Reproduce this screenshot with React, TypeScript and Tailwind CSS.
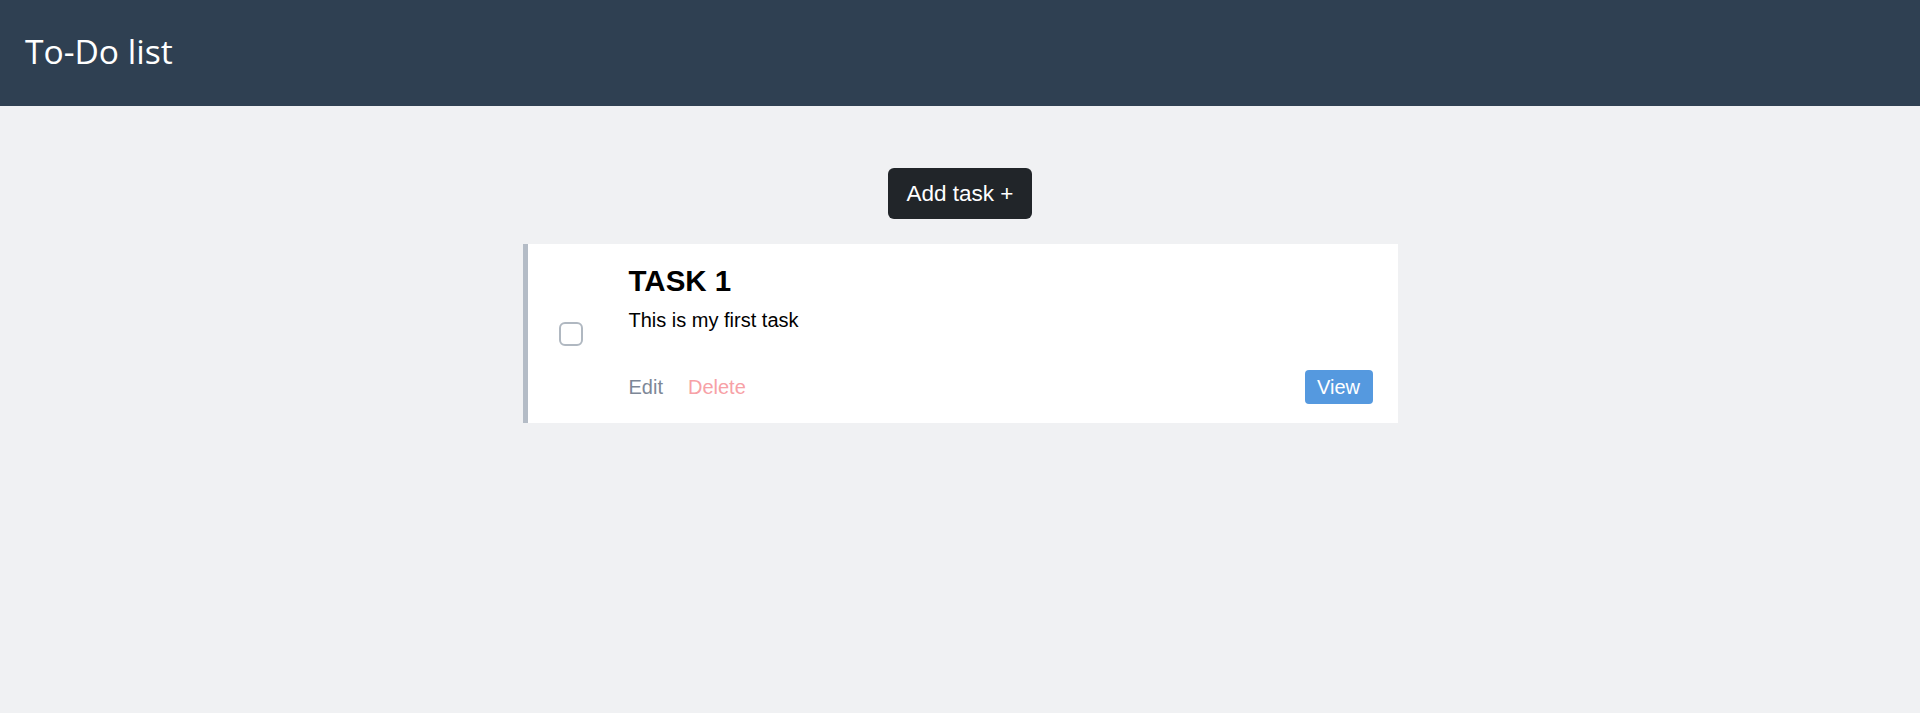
import React from "react";

export default function App() {
  return (
    <div className="min-h-[713px] bg-[#f0f1f3]" style={{ fontFamily: '"Liberation Sans", Arial, sans-serif' }}>
      <header className="h-[106px] bg-[#2f4052] flex items-center pl-[25px] pb-[2px]">
        <h1 className="text-white text-[33.6px] leading-none font-normal" style={{ fontFamily: '"Open Sans", sans-serif' }}>
          To-Do list
        </h1>
      </header>
      <main className="flex flex-col items-center pt-[62px]">
        <button className="h-[51px] w-[144px] rounded-[6px] bg-[#212529] text-white text-[22.5px]">
          Add task +
        </button>
        <div className="mt-[25px] w-[875px] h-[179px] bg-white border-l-[5px] border-[#b4bcc6] flex items-center">
          <div className="pl-[31px] pr-[46px] flex items-center">
            <div className="w-[24px] h-[24px] rounded-[6px] border-2 border-[#b0b8c1] bg-white" />
          </div>
          <div className="flex-1 self-stretch flex flex-col pt-[19px] pr-[25px] pb-[19px]">
            <h3 className="text-[29.5px] leading-[1.2] font-bold text-black mb-[7px]">TASK 1</h3>
            <p className="text-[20px] leading-[1.5] text-black">This is my first task</p>
            <div className="mt-auto flex items-center">
              <span className="text-[20px] text-[#7d8797]">Edit</span>
              <span className="ml-[25px] text-[20px] text-[#f7a1a6]">Delete</span>
              <button className="ml-auto h-[34px] w-[68px] rounded-[4px] bg-[#5599df] text-white text-[20px]">
                View
              </button>
            </div>
          </div>
        </div>
      </main>
    </div>
  );
}
